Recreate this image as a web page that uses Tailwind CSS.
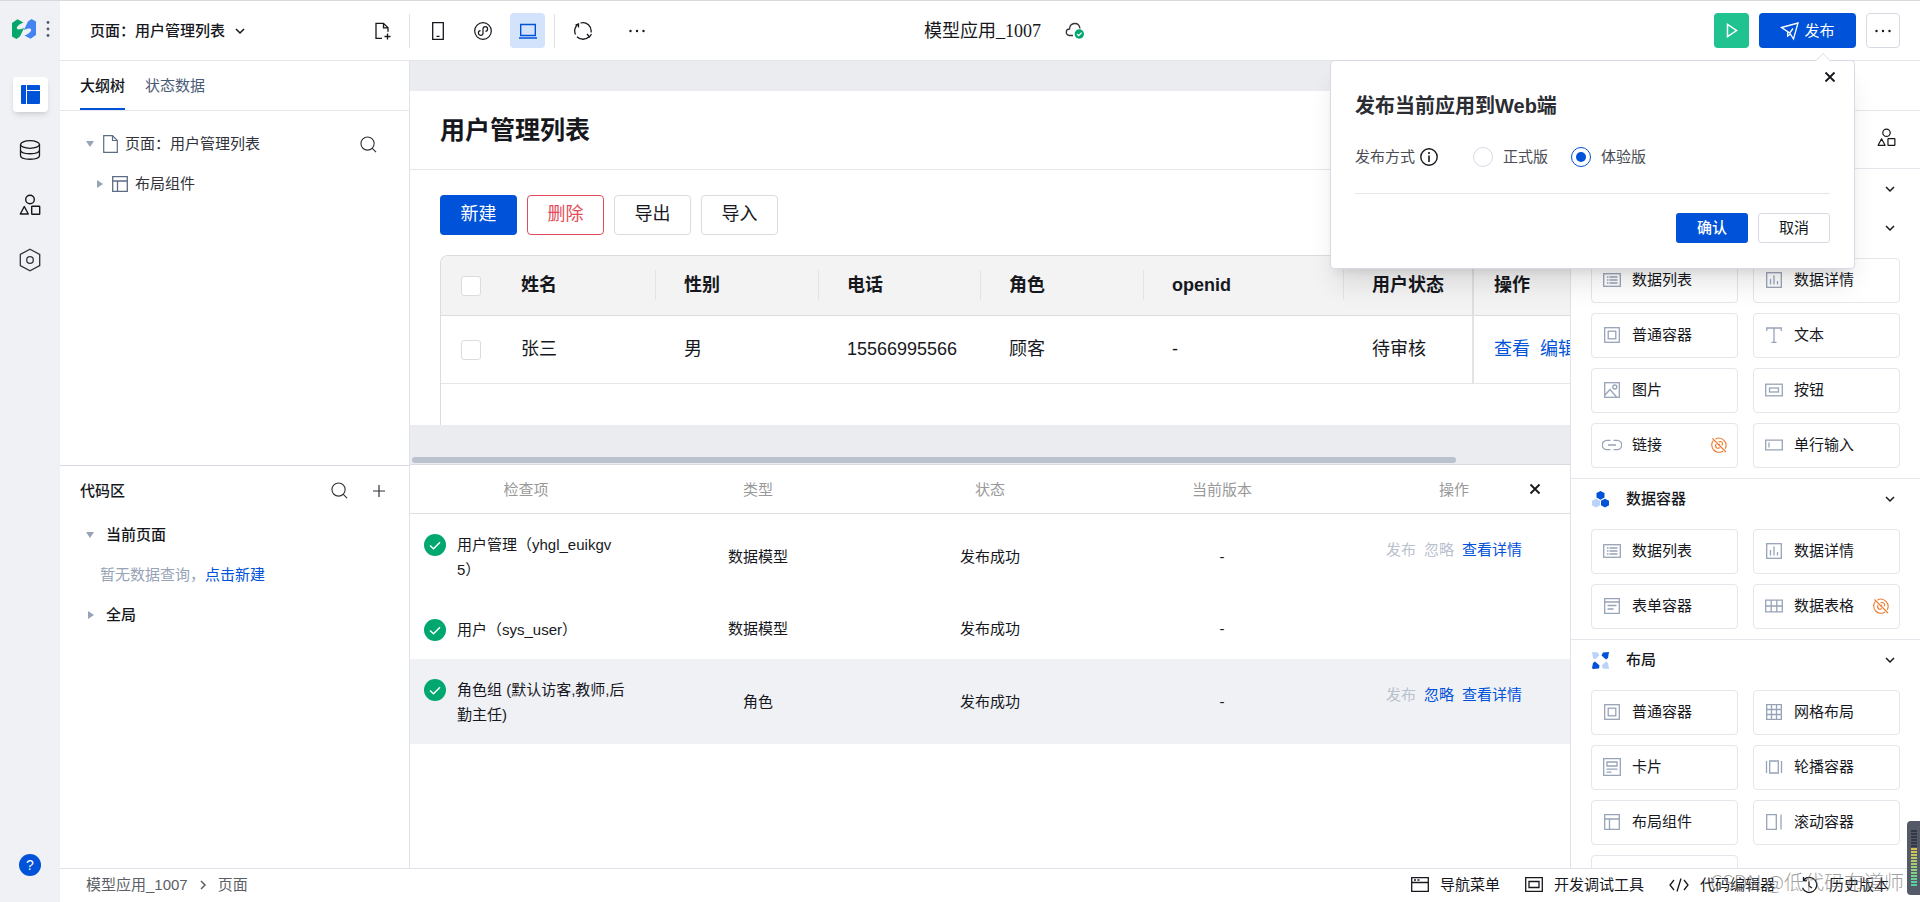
<!DOCTYPE html>
<html lang="zh-CN">
<head>
<meta charset="utf-8">
<title>模型应用_1007</title>
<script src="https://cdn.jsdelivr.net/npm/@tailwindcss/browser@4"></script>
</head>
<body class="relative flex h-screen overflow-hidden border-t border-[#d8d9dc] bg-white font-['Liberation_Sans','Noto_Sans_CJK_SC',sans-serif] text-[15px] leading-5 text-[#16181d]">

<!-- icon sprite -->
<svg class="hidden" aria-hidden="true">
  <symbol id="chev" viewBox="0 0 10 10"><path d="M1 3l4 4 4-4" fill="none" stroke="currentColor" stroke-width="1.5"/></symbol>
  <symbol id="search" viewBox="0 0 18 18"><g fill="none" stroke="currentColor" stroke-width="1.2"><circle cx="8" cy="8" r="7"/><path d="M13 13l4 4"/></g></symbol>
  <symbol id="close" viewBox="0 0 12 12"><path d="M1.5 1.5l9 9M10.500 1.500l-9 9" stroke="currentColor" stroke-width="1.800"/></symbol>
  <symbol id="dots" viewBox="0 0 16 4"><g fill="currentColor"><circle cx="1.500" cy="2" r="1.200"/><circle cx="8" cy="2" r="1.200"/><circle cx="14.500" cy="2" r="1.200"/></g></symbol>
  <symbol id="shapes" viewBox="0 0 22 22"><g fill="none" stroke="currentColor" stroke-width="1.400"><circle cx="11" cy="5.500" r="4.300"/><path d="M5.300 12.500l4 7.500H1.300z" stroke-linejoin="round"/><rect x="12.700" y="12.200" width="8" height="8" rx=".5"/></g></symbol>
  <symbol id="check" viewBox="0 0 22 22"><circle cx="11" cy="11" r="11" fill="#00a870"/><path d="M6 11.500l3.500 3.300 6.500-6.600" fill="none" stroke="#fff" stroke-width="1.500"/></symbol>
  <symbol id="i-list" viewBox="0 0 20 20"><g fill="none" stroke="currentColor" stroke-width="1.300"><rect x="1.700" y="3.700" width="16.600" height="12.600"/><path d="M5 7h1.500M5 10h1.500M5 13h1.500M7.500 7h8M7.500 10h8M7.500 13h8"/></g></symbol>
  <symbol id="i-chart" viewBox="0 0 20 20"><g fill="none" stroke="currentColor" stroke-width="1.300"><rect x="2.700" y="2.700" width="14.600" height="14.600"/><path d="M6.500 9v5.500M10 5.500v9M13.500 11v3.500"/></g></symbol>
  <symbol id="i-box" viewBox="0 0 20 20"><g fill="none" stroke="currentColor" stroke-width="1.300"><rect x="2.700" y="2.700" width="14.600" height="14.600"/><rect x="6.200" y="6.200" width="7.600" height="7.600"/></g></symbol>
  <symbol id="i-text" viewBox="0 0 20 20"><path d="M2.700 6V3h14.600v3M10 3v14.300M7.500 17.300h5" fill="none" stroke="currentColor" stroke-width="1.300"/></symbol>
  <symbol id="i-img" viewBox="0 0 20 20"><g fill="none" stroke="currentColor" stroke-width="1.300"><rect x="2.700" y="2.700" width="14.600" height="14.600"/><path d="M3 15l5-5.500 6.500 7.500"/><circle cx="12.800" cy="7" r="2"/></g></symbol>
  <symbol id="i-btn" viewBox="0 0 20 20"><g fill="none" stroke="currentColor" stroke-width="1.300"><rect x="1.700" y="4.200" width="16.600" height="11.600"/><rect x="5.500" y="8" width="9" height="4"/></g></symbol>
  <symbol id="i-link" viewBox="0 0 20 20"><path d="M8.500 5.300H5a4.500 4.500 0 0 0 0 9.400h3.500M11.500 5.300H15a4.500 4.500 0 0 1 0 9.400h-3.500M6 10h8" fill="none" stroke="currentColor" stroke-width="1.300"/></symbol>
  <symbol id="i-input" viewBox="0 0 20 20"><path d="M1.700 5.200h16.600v9.600H1.700zM5 7.500v5" fill="none" stroke="currentColor" stroke-width="1.300"/></symbol>
  <symbol id="i-form" viewBox="0 0 20 20"><path d="M2.700 2.700h14.600v14.600H2.700zM2.700 6h14.600M5.500 9.500h9M5.500 13h6" fill="none" stroke="currentColor" stroke-width="1.300"/></symbol>
  <symbol id="i-table" viewBox="0 0 20 20"><path d="M1.700 4.200h16.600v11.600H1.700zM1.700 10h16.600M7.200 4.200v11.600M12.800 4.200v11.600" fill="none" stroke="currentColor" stroke-width="1.300"/></symbol>
  <symbol id="i-grid" viewBox="0 0 20 20"><path d="M2.700 2.700h14.600v14.600H2.700zM2.700 7.500h14.600M2.700 12.500h14.600M7.500 2.700v14.600M12.500 2.700v14.600" fill="none" stroke="currentColor" stroke-width="1.300"/></symbol>
  <symbol id="i-card" viewBox="0 0 20 20"><path d="M1.700 1.700h16.600v16.600H1.700zM5 5h10v4H5zM4.500 12.200h11M4.500 15.200h5" fill="none" stroke="currentColor" stroke-width="1.300"/></symbol>
  <symbol id="i-swipe" viewBox="0 0 20 20"><path d="M5.700 4h8.600v12H5.700zM2.500 4v12M17.500 4v12" fill="none" stroke="currentColor" stroke-width="1.300"/></symbol>
  <symbol id="i-layout" viewBox="0 0 20 20"><path d="M2.700 2.700h14.600v14.600H2.700zM2.700 7h14.600M7.500 7v10.300" fill="none" stroke="currentColor" stroke-width="1.300"/></symbol>
  <symbol id="i-scroll" viewBox="0 0 20 20"><path d="M2.700 2.700h9.600v14.600H2.700zM17 2.500v15" fill="none" stroke="currentColor" stroke-width="1.300"/></symbol>
  <symbol id="i-unlink" viewBox="0 0 16 16"><g fill="none" stroke="#ed7b2f" stroke-width="1.100"><path d="M4.500 1.900A7.300 7.300 0 0 1 14.200 11.800M12.200 14A7.300 7.300 0 0 1 2.300 3.500M1.500 1.500l13.500 13.500"/><path d="M7.500 5.200a2.300 2.300 0 1 1 3.300 3.200M9 6.800L7.800 8M5.300 7.200a2.300 2.300 0 1 0 3.300 3.300"/></g></symbol>
</svg>

<!-- icon rail -->
<nav class="flex w-[60px] shrink-0 flex-col items-center bg-[#f0f1f5]">
  <div class="flex h-14 w-full items-center gap-2.5 pl-3">
    <svg class="h-5 w-6" viewBox="0 0 24 20"><path id="half" fill="#07a66b" d="M0 4L5.500 .3 11.500 3.500C8 4.800 5 7 4.800 9.300c.7 2 4 1.200 7.400-.5L8 17.500 4.500 20 0 17.500z"/><path fill="#4384f0" transform="rotate(180 12 10)" d="M0 4L5.500 .3 11.500 3.500C8 4.800 5 7 4.800 9.300c.7 2 4 1.200 7.400-.5L8 17.500 4.500 20 0 17.500z"/></svg>
    <button aria-label="更多" class="text-[#4b5b76]"><svg class="h-4 w-1" viewBox="0 0 4 16"><g fill="currentColor"><circle cx="2" cy="1.500" r="1.400"/><circle cx="2" cy="8" r="1.400"/><circle cx="2" cy="14.500" r="1.400"/></g></svg></button>
  </div>
  <div class="mt-5 flex w-full flex-col items-center gap-5">
    <button aria-label="页面" class="flex size-[35px] items-center justify-center rounded bg-white shadow-md"><svg class="size-[19px]" viewBox="0 0 19 19"><path fill="#0052d9" d="M0 1a1 1 0 0 1 1-1h4v19H1a1 1 0 0 1-1-1zM6 0h12a1 1 0 0 1 1 1v4H6zM6 6h13v12a1 1 0 0 1-1 1H6z"/></svg></button>
    <button aria-label="数据" class="flex size-[35px] items-center justify-center"><svg class="size-[22px]" viewBox="0 0 22 22"><g fill="none" stroke="#16181d" stroke-width="1.300"><ellipse cx="11" cy="5.500" rx="9.500" ry="3.800"/><path d="M1.500 5.500v11c0 5 19 5 19 0v-11M1.500 11c0 5 19 5 19 0"/></g></svg></button>
    <button aria-label="组件" class="flex size-[35px] items-center justify-center"><svg class="size-[22px]"><use href="#shapes"/></svg></button>
    <button aria-label="设置" class="flex size-[35px] items-center justify-center"><svg class="h-6 w-[22px]" viewBox="0 0 22 24"><g fill="none" stroke="#30333a" stroke-width="1.300"><path d="M11 1.300l9.700 5.200v11L11 22.700 1.300 17.500v-11z"/><circle cx="11" cy="12" r="3.300"/></g></svg></button>
  </div>
  <button class="mt-auto mb-[26px] size-[22px] rounded-full bg-[#0052d9] text-sm leading-[22px] text-white" aria-label="帮助">?</button>
</nav>

<div class="flex min-w-0 flex-1 flex-col">
  <!-- top bar -->
  <header class="relative flex h-[60px] shrink-0 items-center border-b border-[#e3e6eb]">
    <div class="flex w-[350px] items-center justify-between border-r border-[#dfe2e8] py-[7px] pr-[18px] pl-[30px]">
      <button class="flex items-center gap-2.5 font-medium">页面：用户管理列表<svg class="size-2.5"><use href="#chev"/></svg></button>
      <button aria-label="新建页面"><svg class="h-[18px] w-4" viewBox="0 0 16 18"><path d="M7 16.300H1V1.300h7.500l4.500 4.500v4M8.500 1.300v4.500H13M12.500 11.500v6M9.500 14.500h6" fill="none" stroke="currentColor" stroke-width="1.300"/></svg></button>
    </div>
    <div class="flex h-[34px] items-center border-r border-[#dfe2e8] pr-[9px] pl-2.5">
      <button aria-label="手机" class="flex size-[35px] items-center justify-center"><svg class="h-[18px] w-3" viewBox="0 0 12 18"><path d="M.7.700h10.600v16.600H.7zM4.500 14.300h3" fill="none" stroke="currentColor" stroke-width="1.300"/></svg></button>
      <button aria-label="小程序" class="ml-2.5 flex size-[35px] items-center justify-center"><svg class="size-[18px]" viewBox="0 0 18 18"><g fill="none" stroke="currentColor" stroke-width="1.200"><circle cx="9" cy="9" r="8.300"/><path d="M6.500 8.700a2.300 2.300 0 1 0 2.500 2.500V6.800a2.300 2.300 0 1 1 2.500 2.500"/></g></svg></button>
      <button aria-label="电脑" class="ml-2.5 flex size-[35px] items-center justify-center rounded bg-[#d4e3fc] text-[#0052d9]"><svg class="h-4 w-[18px]" viewBox="0 0 18 16"><path d="M1.700 1.500h14.600v11H1.700zM0 15h18" fill="none" stroke="currentColor" stroke-width="1.400"/></svg></button>
    </div>
    <button aria-label="刷新" class="ml-[18px]"><svg class="size-5" viewBox="0 0 20 20"><g fill="none" stroke="currentColor" stroke-width="1.300"><path d="M7.500 2A8.300 8.300 0 0 1 18 11.500M16 15.700A8.300 8.300 0 0 1 4 15.700M2.500 13.500A8.300 8.300 0 0 1 5 3.300"/><path d="M2.500 4l3-1v3.500M18.500 13l-2 3-2.500-3"/></g></svg></button>
    <button aria-label="更多操作" class="ml-9"><svg class="h-1 w-4"><use href="#dots"/></svg></button>
    <div class="ml-[279px] flex items-center gap-6 font-['Liberation_Serif','Noto_Sans_CJK_SC',serif] text-[18px]">模型应用_1007
      <svg class="h-[18px] w-5" viewBox="0 0 20 18"><path d="M8 13.500H4.500C0 13 .5 7 4.500 7c.5-7 9.500-7.500 10.500-.5" fill="none" stroke="#30333a" stroke-width="1.300"/><circle cx="14.300" cy="12" r="4.700" fill="#00a870"/><path d="M12 12l1.700 1.600 3-3" fill="none" stroke="#fff" stroke-width="1.300"/></svg>
    </div>
    <div class="ml-auto flex gap-2.5 pr-5">
      <button aria-label="预览" class="flex size-[35px] items-center justify-center rounded bg-[#20c28f]"><svg class="h-[15px] w-3" viewBox="0 0 12 15"><path d="M1.500 1.500v12l9-6z" fill="none" stroke="#fff" stroke-width="1.500"/></svg></button>
      <button class="flex h-[35px] w-[97px] items-center justify-center gap-1 rounded bg-[#0052d9] text-white"><svg class="size-5" viewBox="0 0 20 20"><path d="M1.500 6.500L18 2l-4.500 16-3.800-6zM9.700 12L13 7.500M1.500 6.500l6.200 4.200V15l3-2" fill="none" stroke="#fff" stroke-width="1.300"/></svg>发布</button>
      <button aria-label="更多发布操作" class="flex h-[35px] w-[34px] items-center justify-center rounded border border-[#d5dae3]"><svg class="h-1 w-4"><use href="#dots"/></svg></button>
    </div>
  </header>

  <div class="flex min-h-0 flex-1">
    <!-- outline and code panels -->
    <aside class="flex w-[350px] shrink-0 flex-col border-r border-[#e0e3e9]">
      <section class="h-[405px] shrink-0 border-b border-[#d5dae3]">
        <div class="flex h-[50px] gap-5 border-b border-[#e3e6eb] pl-5">
          <button class="border-b-2 border-[#0052d9] pt-0.5 font-medium">大纲树</button>
          <button class="border-b-2 border-transparent pt-0.5 text-[#4b5b76]">状态数据</button>
        </div>
        <div class="flex flex-col pt-[13px] pr-8 text-[#30333a]">
          <div class="flex h-10 items-center pl-[26px]">
            <svg class="h-1.5 w-2 text-[#97a3b7]" viewBox="0 0 8 6"><path d="M0 0h8L4 6z" fill="currentColor"/></svg>
            <svg class="ml-[9px] h-[18px] w-[15px] text-[#5d6c85]" viewBox="0 0 15 18"><path d="M.7.700h8.800l4.800 4.800v11.800H.7zM9.500.700v4.800h4.800" fill="none" stroke="currentColor" stroke-width="1.200"/></svg>
            <span class="ml-[7px]">页面：用户管理列表</span>
            <button aria-label="搜索大纲" class="ml-auto"><svg class="size-[17px]"><use href="#search"/></svg></button>
          </div>
          <div class="flex h-10 items-center pl-[37px]">
            <svg class="h-2 w-1.5 text-[#97a3b7]" viewBox="0 0 6 8"><path d="M0 0v8l6-4z" fill="currentColor"/></svg>
            <svg class="ml-[7px] size-5 text-[#5d6c85]"><use href="#i-layout"/></svg>
            <span class="ml-[5px]">布局组件</span>
          </div>
        </div>
      </section>
      <section class="flex-1">
        <div class="flex h-[49px] items-center pr-6 pl-5 font-medium">代码区
          <button aria-label="搜索代码" class="ml-auto text-[#30333a]"><svg class="size-[17px]"><use href="#search"/></svg></button>
          <button aria-label="新建代码" class="ml-[25px]"><svg class="size-3" viewBox="0 0 12 12"><path d="M6 0v12M0 6h12" stroke="#30333a" stroke-width="1.200"/></svg></button>
        </div>
        <div class="flex h-10 items-center gap-3 pl-[26px] font-medium"><svg class="h-1.5 w-2 text-[#97a3b7]" viewBox="0 0 8 6"><path d="M0 0h8L4 6z" fill="currentColor"/></svg>当前页面</div>
        <div class="flex h-10 items-center pl-10 text-[#97a3b7]">暂无数据查询，<a href="#" class="text-[#0052d9]">点击新建</a></div>
        <div class="flex h-10 items-center gap-3 pl-7 font-medium"><svg class="h-2 w-1.5 text-[#97a3b7]" viewBox="0 0 6 8"><path d="M0 0v8l6-4z" fill="currentColor"/></svg>全局</div>
      </section>
    </aside>

    <main class="flex min-w-0 flex-1 flex-col">
      <!-- page canvas -->
      <section class="flex h-[404px] shrink-0 flex-col overflow-hidden border-b border-[#d9dbe0] bg-[#eaecf0] pt-[30px]">
        <div class="h-[334px] overflow-hidden bg-white">
          <div class="flex h-[79px] items-center border-b border-[#e3e6eb] pl-[30px]"><h1 class="text-[25px] leading-8 font-bold">用户管理列表</h1></div>
          <div class="flex gap-2.5 pt-[25px] pl-[30px] text-[18px]">
            <button class="h-10 w-[77px] rounded bg-[#0052d9] pb-0.5 text-white">新建</button>
            <button class="h-10 w-[77px] rounded border border-[#e34d59] pb-0.5 text-[#e34d59]">删除</button>
            <button class="h-10 w-[77px] rounded border border-[#dcdcdc] pb-0.5">导出</button>
            <button class="h-10 w-[77px] rounded border border-[#dcdcdc] pb-0.5">导入</button>
          </div>
          <div class="mt-5 ml-[30px] h-48 overflow-hidden rounded-tl-lg border-t border-l border-[#dcdcdc]">
            <table class="w-[1230px] table-fixed text-left text-[18px]">
              <colgroup><col class="w-[52px]"><col class="w-[163px]"><col class="w-[163px]"><col class="w-[162px]"><col class="w-[163px]"><col class="w-[200px]"><col class="w-[129px]"><col></colgroup>
              <thead class="bg-[#f3f3f3]">
                <tr class="h-[59px] border-b border-[#dcdcdc]">
                  <th class="pt-0.5 pl-5"><input type="checkbox" aria-label="全选" class="block size-5 appearance-none rounded-[3px] border border-[#dcdcdc] bg-white"></th>
                  <th class="p-0"><div class="border-r border-[#e3e3e3] py-[5px] pl-7">姓名</div></th>
                  <th class="p-0"><div class="border-r border-[#e3e3e3] py-[5px] pl-7">性别</div></th>
                  <th class="p-0"><div class="border-r border-[#e3e3e3] py-[5px] pl-7">电话</div></th>
                  <th class="p-0"><div class="border-r border-[#e3e3e3] py-[5px] pl-7">角色</div></th>
                  <th class="p-0"><div class="border-r border-[#e3e3e3] py-[5px] pl-7">openid</div></th>
                  <th class="p-0 pl-7">用户状态</th>
                  <th class="border-l-2 border-[#dedede] p-0 pl-5">操作</th>
                </tr>
              </thead>
              <tbody>
                <tr class="h-[68px] border-b border-[#e7e7e7]">
                  <td class="pt-0.5 pl-5"><input type="checkbox" aria-label="选择张三" class="block size-5 appearance-none rounded-[3px] border border-[#dcdcdc] bg-white"></td>
                  <td class="pl-7">张三</td><td class="pl-7">男</td><td class="pl-7">15566995566</td><td class="pl-7">顾客</td><td class="pl-7">-</td><td class="pl-7">待审核</td>
                  <td class="border-l-2 border-[#e3e3e3] pl-5 text-[#0052d9]"><div class="flex gap-2.5"><a href="#">查看</a><a href="#">编辑</a></div></td>
                </tr>
              </tbody>
            </table>
          </div>
        </div>
        <div class="mt-auto mb-px ml-0.5 h-1.5 w-[90%] rounded-full bg-[#bac2ce]"></div>
      </section>

      <!-- publish check list -->
      <section class="relative flex-1">
        <table class="w-full table-fixed text-center">
          <thead><tr class="h-[49px] text-[#999] shadow-[inset_0_-1px_0_#dcdee3]"><th class="font-normal">检查项</th><th class="font-normal">类型</th><th class="font-normal">状态</th><th class="font-normal">当前版本</th><th class="font-normal">操作</th></tr></thead>
          <tbody>
            <tr class="h-[85px]">
              <td class="py-0"><div class="flex gap-[11px] pl-3.5 text-left leading-[25px]"><svg class="mt-0.5 size-[22px] shrink-0"><use href="#check"/></svg><span>用户管理（yhgl_euikgv<br>5）</span></div></td>
              <td>数据模型</td><td>发布成功</td><td>-</td>
              <td class="pt-[26px] align-top"><div class="flex justify-center gap-2 text-[#b9c1ce]"><button disabled>发布</button><button disabled>忽略</button><a href="#" class="text-[#0052d9]">查看详情</a></div></td>
            </tr>
            <tr class="h-[60px]">
              <td><div class="flex gap-[11px] pl-3.5 text-left leading-[25px]"><svg class="mt-0.5 size-[22px] shrink-0"><use href="#check"/></svg><span>用户（sys_user）</span></div></td>
              <td>数据模型</td><td>发布成功</td><td>-</td><td></td>
            </tr>
            <tr class="h-[85px] bg-[#f0f1f5]">
              <td><div class="flex gap-[11px] pl-3.5 text-left leading-[25px]"><svg class="mt-0.5 size-[22px] shrink-0"><use href="#check"/></svg><span>角色组 (默认访客,教师,后<br>勤主任)</span></div></td>
              <td>角色</td><td>发布成功</td><td>-</td>
              <td class="pt-[26px] align-top"><div class="flex justify-center gap-2 text-[#b9c1ce]"><button disabled>发布</button><button class="text-[#0052d9]">忽略</button><a href="#" class="text-[#0052d9]">查看详情</a></div></td>
            </tr>
          </tbody>
        </table>
        <button aria-label="关闭检查列表" class="absolute top-[18px] right-[29px]"><svg class="size-3"><use href="#close"/></svg></button>
      </section>
    </main>

    <!-- component library -->
    <aside class="w-[350px] shrink-0 overflow-hidden border-l border-[#e0e3e9]">
      <div class="h-[50px] border-b border-[#e3e6eb]"></div>
      <div class="flex h-[58px] items-center justify-end border-b border-[#e3e6eb] pr-6 pb-1"><button aria-label="组件库"><svg class="size-[19px]"><use href="#shapes"/></svg></button></div>
      <div class="flex h-[39px] items-center justify-end pr-[25px]"><button aria-label="展开分组"><svg class="size-2.5"><use href="#chev"/></svg></button></div>

      <section class="border-b border-[#e3e6eb] pb-2.5">
        <div class="flex h-10 items-center justify-end pr-[25px]"><button aria-label="收起分组"><svg class="size-2.5"><use href="#chev"/></svg></button></div>
        <div class="mt-2.5 grid grid-cols-2 gap-x-[15px] gap-y-2.5 pr-5 pl-5">
          <button class="flex h-[45px] items-center gap-2.5 rounded border border-[#e3e6eb] px-2.5 pb-0.5"><svg class="size-5 text-[#97a3b7]"><use href="#i-list"/></svg>数据列表</button>
          <button class="flex h-[45px] items-center gap-2.5 rounded border border-[#e3e6eb] px-2.5 pb-0.5"><svg class="size-5 text-[#97a3b7]"><use href="#i-chart"/></svg>数据详情</button>
          <button class="flex h-[45px] items-center gap-2.5 rounded border border-[#e3e6eb] px-2.5 pb-0.5"><svg class="size-5 text-[#97a3b7]"><use href="#i-box"/></svg>普通容器</button>
          <button class="flex h-[45px] items-center gap-2.5 rounded border border-[#e3e6eb] px-2.5 pb-0.5"><svg class="size-5 text-[#97a3b7]"><use href="#i-text"/></svg>文本</button>
          <button class="flex h-[45px] items-center gap-2.5 rounded border border-[#e3e6eb] px-2.5 pb-0.5"><svg class="size-5 text-[#97a3b7]"><use href="#i-img"/></svg>图片</button>
          <button class="flex h-[45px] items-center gap-2.5 rounded border border-[#e3e6eb] px-2.5 pb-0.5"><svg class="size-5 text-[#97a3b7]"><use href="#i-btn"/></svg>按钮</button>
          <button class="flex h-[45px] items-center gap-2.5 rounded border border-[#e3e6eb] px-2.5 pb-0.5"><svg class="size-5 text-[#97a3b7]"><use href="#i-link"/></svg>链接<svg class="ml-auto size-4"><use href="#i-unlink"/></svg></button>
          <button class="flex h-[45px] items-center gap-2.5 rounded border border-[#e3e6eb] px-2.5 pb-0.5"><svg class="size-5 text-[#97a3b7]"><use href="#i-input"/></svg>单行输入</button>
        </div>
      </section>

      <section class="border-b border-[#e3e6eb] pb-2.5">
        <div class="flex h-10 items-center pr-[25px] pl-[21px] font-medium">
          <svg class="mr-[17px] size-[17px]" viewBox="0 0 17 17"><g fill="#0052d9"><path d="M8.500 0l4 2v4.500l-4 2.300-4-2.300V2z"/><path d="M13 7.800l4 2v4.500l-4 2.300-4-2.300V9.800z"/><path fill="#bbd3fb" d="M4 7.800l4 2v4.500l-4 2.300-4-2.300V9.800z"/></g></svg>数据容器
          <button aria-label="收起数据容器" class="ml-auto"><svg class="size-2.5"><use href="#chev"/></svg></button>
        </div>
        <div class="mt-2.5 grid grid-cols-2 gap-x-[15px] gap-y-2.5 pr-5 pl-5">
          <button class="flex h-[45px] items-center gap-2.5 rounded border border-[#e3e6eb] px-2.5 pb-0.5"><svg class="size-5 text-[#97a3b7]"><use href="#i-list"/></svg>数据列表</button>
          <button class="flex h-[45px] items-center gap-2.5 rounded border border-[#e3e6eb] px-2.5 pb-0.5"><svg class="size-5 text-[#97a3b7]"><use href="#i-chart"/></svg>数据详情</button>
          <button class="flex h-[45px] items-center gap-2.5 rounded border border-[#e3e6eb] px-2.5 pb-0.5"><svg class="size-5 text-[#97a3b7]"><use href="#i-form"/></svg>表单容器</button>
          <button class="flex h-[45px] items-center gap-2.5 rounded border border-[#e3e6eb] px-2.5 pb-0.5"><svg class="size-5 text-[#97a3b7]"><use href="#i-table"/></svg>数据表格<svg class="ml-auto size-4"><use href="#i-unlink"/></svg></button>
        </div>
      </section>

      <section>
        <div class="flex h-10 items-center pr-[25px] pl-[21px] font-medium">
          <svg class="mr-[17px] size-[17px]" viewBox="0 0 17 17"><path fill="#bbd3fb" d="M0 0l6 .5 1.300 3L3 7.500 1 6zM17 17l-6-.5-1.300-3L14 9.500l2 1.500z"/><path fill="#0052d9" d="M17 0l-6 .5-1.500 3L14 7.500 16 6zM0 16l1-5 2-1.500 4.500 4L7 16.500 1 17z"/></svg>布局
          <button aria-label="收起布局" class="ml-auto"><svg class="size-2.5"><use href="#chev"/></svg></button>
        </div>
        <div class="mt-2.5 grid grid-cols-2 gap-x-[15px] gap-y-2.5 pr-5 pl-5">
          <button class="flex h-[45px] items-center gap-2.5 rounded border border-[#e3e6eb] px-2.5 pb-0.5"><svg class="size-5 text-[#97a3b7]"><use href="#i-box"/></svg>普通容器</button>
          <button class="flex h-[45px] items-center gap-2.5 rounded border border-[#e3e6eb] px-2.5 pb-0.5"><svg class="size-5 text-[#97a3b7]"><use href="#i-grid"/></svg>网格布局</button>
          <button class="flex h-[45px] items-center gap-2.5 rounded border border-[#e3e6eb] px-2.5 pb-0.5"><svg class="size-5 text-[#97a3b7]"><use href="#i-card"/></svg>卡片</button>
          <button class="flex h-[45px] items-center gap-2.5 rounded border border-[#e3e6eb] px-2.5 pb-0.5"><svg class="size-5 text-[#97a3b7]"><use href="#i-swipe"/></svg>轮播容器</button>
          <button class="flex h-[45px] items-center gap-2.5 rounded border border-[#e3e6eb] px-2.5 pb-0.5"><svg class="size-5 text-[#97a3b7]"><use href="#i-layout"/></svg>布局组件</button>
          <button class="flex h-[45px] items-center gap-2.5 rounded border border-[#e3e6eb] px-2.5 pb-0.5"><svg class="size-5 text-[#97a3b7]"><use href="#i-scroll"/></svg>滚动容器</button>
          <div class="h-[45px] rounded border border-[#e3e6eb]"></div>
        </div>
      </section>
    </aside>
  </div>

  <!-- status bar -->
  <footer class="flex h-[34px] shrink-0 items-center border-t border-[#e0e3e9] bg-white pr-[31px] pb-0.5 pl-[26px]">
    <div class="flex items-center gap-2.5 text-[#5c5f66]">模型应用_1007<svg class="size-2.5 -rotate-90"><use href="#chev"/></svg><span>页面</span></div>
    <div class="ml-auto flex items-center gap-[25px]">
      <button class="flex items-center gap-[11px]"><svg class="h-[15px] w-[18px]" viewBox="0 0 18 15"><path d="M.7.700h16.600v13.600H.7zM.700 5.500h16.600M3 3h2M6.500 3h2" fill="none" stroke="currentColor" stroke-width="1.300"/></svg>导航菜单</button>
      <button class="flex items-center gap-[11px]"><svg class="h-[15px] w-[18px]" viewBox="0 0 18 15"><path d="M.7.700h16.600v13.600H.7zM4 4.500h10v6H4z" fill="none" stroke="currentColor" stroke-width="1.300"/></svg>开发调试工具</button>
      <button class="flex items-center gap-[11px]"><svg class="h-3.5 w-5" viewBox="0 0 20 14"><path d="M5 2L1 7l4 5M15 2l4 5-4 5M12 .500L8 13.500" fill="none" stroke="currentColor" stroke-width="1.300"/></svg>代码编辑器</button>
      <button class="flex items-center gap-[11px]"><svg class="size-[18px]" viewBox="0 0 18 18"><path d="M4 3.500A7.500 7.500 0 1 1 2.500 12M3.500 1v3.500H7M9 5.500v4.500l3 2" fill="none" stroke="currentColor" stroke-width="1.300"/></svg>历史版本</button>
    </div>
  </footer>
</div>

<!-- publish popover -->
<div role="dialog" aria-label="发布当前应用到Web端" class="absolute top-[59px] right-[65px] h-[209px] w-[525px] rounded border border-[#d5dae3] bg-white px-6 shadow-xl">
  <span class="absolute -top-[6px] right-[26px] size-[10px] rotate-45 border-t border-l border-[#e3e6eb] bg-white"></span>
  <button aria-label="关闭" class="absolute top-2.5 right-[18px]"><svg class="size-3"><use href="#close"/></svg></button>
  <h2 class="pt-[33px] text-[20px] leading-6 font-bold text-[#2b2d33]">发布当前应用到Web端</h2>
  <fieldset class="mt-[27px] flex h-6 items-center text-[#4a4d54]">
    <legend class="sr-only">发布方式</legend>
    <span aria-hidden="true">发布方式</span>
    <svg class="ml-[5px] size-[18px] text-[#16181d]" viewBox="0 0 18 18"><circle cx="9" cy="9" r="8.200" fill="none" stroke="currentColor" stroke-width="1.400"/><path d="M9 7.500V14M9 4v2" stroke="currentColor" stroke-width="1.600"/></svg>
    <label class="ml-[35px] flex items-center gap-2.5"><input type="radio" name="mode" class="size-5 appearance-none rounded-full border border-[#d5dae3] bg-clip-content p-1 checked:border-[#0052d9] checked:bg-[#0052d9]">正式版</label>
    <label class="ml-[23px] flex items-center gap-2.5"><input type="radio" name="mode" checked class="size-5 appearance-none rounded-full border border-[#d5dae3] bg-clip-content p-1 checked:border-[#0052d9] checked:bg-[#0052d9]">体验版</label>
  </fieldset>
  <div class="mt-6 flex justify-end gap-2.5 border-t border-[#e3e6eb] pt-[19px]">
    <button class="h-[30px] w-[72px] rounded-[3px] bg-[#0052d9] font-medium text-white">确认</button>
    <button class="h-[30px] w-[72px] rounded-[3px] border border-[#d5dae3]">取消</button>
  </div>
</div>

<!-- watermark and floating level meter -->
<div class="pointer-events-none absolute right-4 bottom-1.5 font-['Noto_Sans_CJK_SC',sans-serif] text-[20px] leading-7 font-light text-[#777]/70">CSDN @低代码布道师</div>
<div class="absolute right-0 bottom-[7px] flex h-[74px] w-[13px] items-end justify-center rounded-l bg-[#555a68] py-2">
  <svg class="h-[58px] w-1.5" viewBox="0 0 6 58"><defs><linearGradient id="lv" x1="0" y1="0" x2="0" y2="1"><stop offset="0" stop-color="#e0c34a"/><stop offset=".5" stop-color="#9fce78"/><stop offset="1" stop-color="#4bcfa8"/></linearGradient></defs><path d="M0 0h6v18H0z" fill="#343843"/><path d="M0 18h6v40H0z" fill="url(#lv)"/><path d="M3 0v58" stroke="#555a68" stroke-width="6" stroke-dasharray="1 2"/></svg>
</div>
</body>
</html>
